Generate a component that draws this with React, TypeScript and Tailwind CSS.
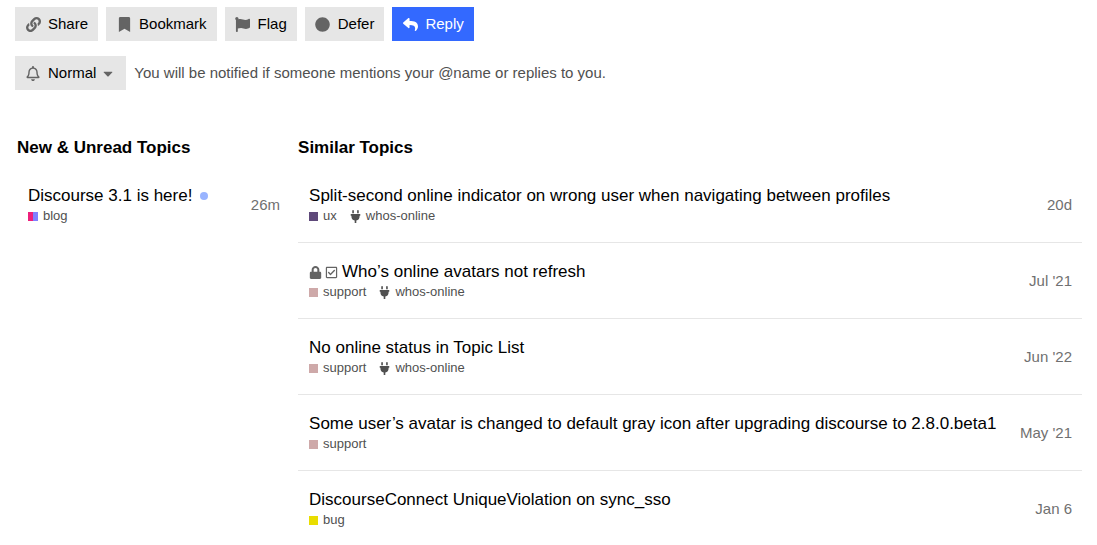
import type { ReactNode } from "react";
import {
  FaBookmark,
  FaCaretDown,
  FaCircle,
  FaFlag,
  FaLink,
  FaLock,
  FaPlug,
  FaRegBell,
  FaRegCheckSquare,
  FaReply,
} from "react-icons/fa";

type Topic = {
  title: string;
  category: string;
  swatch: string;
  tag?: string;
  age: string;
  unread?: boolean;
  solved?: boolean;
};

const unreadTopics: Topic[] = [
  {
    title: "Discourse 3.1 is here!",
    category: "blog",
    swatch: "w-[10px] bg-linear-to-r from-[#ed207b] from-50% to-[#8080ff] to-50%",
    age: "26m",
    unread: true,
  },
];

const similarTopics: Topic[] = [
  {
    title: "Split-second online indicator on wrong user when navigating between profiles",
    category: "ux",
    swatch: "w-[9px] bg-[#5f497a]",
    tag: "whos-online",
    age: "20d",
  },
  {
    title: "Who’s online avatars not refresh",
    category: "support",
    swatch: "w-[9px] bg-[#cea9a9]",
    tag: "whos-online",
    age: "Jul '21",
    solved: true,
  },
  {
    title: "No online status in Topic List",
    category: "support",
    swatch: "w-[9px] bg-[#cea9a9]",
    tag: "whos-online",
    age: "Jun '22",
  },
  {
    title: "Some user’s avatar is changed to default gray icon after upgrading discourse to 2.8.0.beta1",
    category: "support",
    swatch: "w-[9px] bg-[#cea9a9]",
    age: "May '21",
  },
  {
    title: "DiscourseConnect UniqueViolation on sync_sso",
    category: "bug",
    swatch: "w-[9px] bg-[#e9dd00]",
    age: "Jan 6",
  },
];

function ActionButton({ icon, label, primary }: { icon: ReactNode; label: string; primary?: boolean }) {
  const tone = primary ? "bg-[#3369ff] text-white" : "bg-[#e6e6e6] text-black";
  const iconTone = primary ? "text-white" : "text-[#646464]";
  return (
    <button type="button" className={`flex h-[34px] items-center gap-[7px] px-[10px] ${tone}`}>
      <span className={`flex w-4 justify-center ${iconTone}`}>{icon}</span>
      {label}
    </button>
  );
}

function TopicTable({ heading, topics }: { heading: string; topics: Topic[] }) {
  return (
    <section className="min-w-0">
      <h3 className="mb-[7px] text-[17px] leading-6 font-bold">{heading}</h3>
      <table className="w-full border-collapse" aria-label={heading}>
        <tbody>
          {topics.map((topic) => (
            <tr key={topic.title} className="border-b border-[#e6e6e6] last:border-b-0">
              <td className="pt-[19px] pb-4 pl-[11px]">
                <div className="flex items-center text-[17px] leading-5">
                  {topic.solved && (
                    <span className="mr-1 flex gap-[3px] text-[13px] text-[#646464]">
                      <FaLock aria-label="Closed" />
                      <FaRegCheckSquare aria-label="Solved" />
                    </span>
                  )}
                  <a href="#">{topic.title}</a>
                  {topic.unread && <span className="ml-2 size-2 rounded-full bg-[#99b4ff]" />}
                </div>
                <div className="flex items-center gap-3 text-[13px] leading-5 text-[#505050]">
                  <a href="#" className="flex items-center gap-[5px]">
                    <span className={`h-[9px] ${topic.swatch}`} />
                    {topic.category}
                  </a>
                  {topic.tag && (
                    <a href="#" className="flex items-center gap-1">
                      <FaPlug className="size-[13px]" />
                      {topic.tag}
                    </a>
                  )}
                </div>
              </td>
              <td className="pr-[10px] text-right text-[15px] whitespace-nowrap text-[#707070]">{topic.age}</td>
            </tr>
          ))}
        </tbody>
      </table>
    </section>
  );
}

export default function App() {
  return (
    <main className="bg-white px-[15px] pt-[7px] font-['Liberation_Sans',Arial,sans-serif] text-[15px] leading-5 text-black">
      <div className="flex flex-wrap gap-2">
        <ActionButton icon={<FaLink />} label="Share" />
        <ActionButton icon={<FaBookmark />} label="Bookmark" />
        <ActionButton icon={<FaFlag />} label="Flag" />
        <ActionButton icon={<FaCircle />} label="Defer" />
        <ActionButton icon={<FaReply />} label="Reply" primary />
      </div>
      <div className="mt-[15px] flex items-center gap-2">
        <button type="button" className="flex h-[34px] items-center bg-[#e6e6e6] px-[10px]">
          <FaRegBell className="mr-[7px] w-4 text-[#646464]" />
          Normal
          <FaCaretDown className="ml-1 w-4 text-[#646464]" />
        </button>
        <span className="text-[#505050]">You will be notified if someone mentions your @name or replies to you.</span>
      </div>
      <div className="mt-[46px] grid grid-cols-[minmax(0,31fr)_minmax(0,89fr)] gap-2 pl-[2px]">
        <TopicTable heading="New & Unread Topics" topics={unreadTopics} />
        <TopicTable heading="Similar Topics" topics={similarTopics} />
      </div>
    </main>
  );
}
